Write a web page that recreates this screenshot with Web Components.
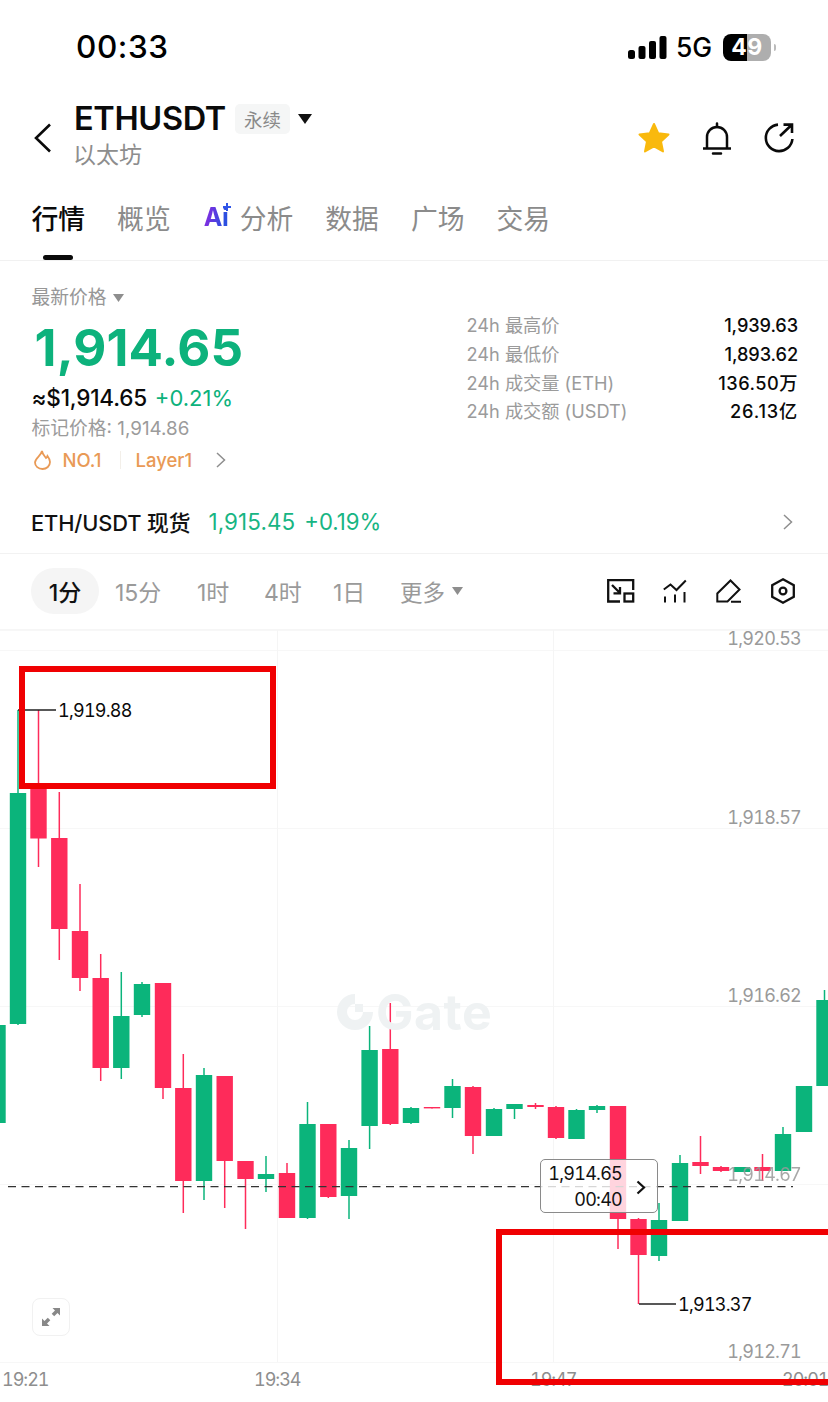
<!DOCTYPE html>
<html lang="zh">
<head>
<meta charset="utf-8">
<title>ETHUSDT</title>
<style>
html,body{margin:0;padding:0;background:#fff}
body{width:828px;height:1402px;overflow:hidden;font-family:Inter,"Noto Sans CJK SC",sans-serif;color:#0a0a0a;-webkit-font-smoothing:antialiased}
</style>
</head>
<body>
<app-page>
  <status-bar></status-bar>
  <coin-header></coin-header>
  <tab-bar></tab-bar>
  <price-panel></price-panel>
  <spot-row></spot-row>
  <interval-bar></interval-bar>
  <kline-chart></kline-chart>
</app-page>
<script>
function define(name, html){
  customElements.define(name, class extends HTMLElement{
    constructor(){super();this.attachShadow({mode:'open'}).innerHTML=html;}
  });
}
const FONT='Inter,"Noto Sans CJK SC",sans-serif';

define('app-page',`<style>:host{display:flex;flex-direction:column;width:828px;height:1402px;overflow:hidden;background:#fff}</style><slot></slot>`);

define('status-bar',`<style>
:host{display:flex;height:94px;box-sizing:border-box;align-items:flex-start;padding:27px 0 0 76px;font-family:${FONT}}
.t{font-size:31.5px;line-height:40px;font-weight:500;letter-spacing:.6px;width:552px;color:#000}
.r{position:relative;display:flex;align-items:center;height:40px}
svg{display:block}
.g{font-size:26.5px;font-weight:500;color:#000;margin-left:9px;width:47px;letter-spacing:-.2px}
.b{position:relative;width:48px;height:27px;border-radius:8px;overflow:hidden;background:linear-gradient(90deg,#000 50%,#aeaeae 50%);display:flex;align-items:center;justify-content:center;color:#fff;font-size:23px;font-weight:700;line-height:27px;letter-spacing:.5px}
.n{width:2px;height:7px;background:#bbb;border-radius:0 2px 2px 0;margin-left:3px}
</style>
<div class="t">00:33</div>
<div class="r">
<svg width="39" height="24" viewBox="0 0 39 24" fill="#000"><rect x="0" y="15" width="7" height="9" rx="2.5"/><rect x="10.500" y="11" width="7" height="13" rx="2"/><rect x="21" y="6" width="7" height="18" rx="2"/><rect x="31.500" y="1" width="7" height="23" rx="2"/></svg>
<span class="g">5G</span><div class="b">49</div><span class="n"></span>
</div>`);

define('coin-header',`<style>
:host{display:flex;height:90px;box-sizing:border-box;font-family:${FONT};position:relative}
.back{width:74px;flex:none;display:flex;align-items:center;padding:0 0 2px 34px;box-sizing:border-box}
.mid{flex:1;display:flex;flex-direction:column;padding-top:6px}
.top{display:flex;align-items:center;height:38px}
.sym{font-size:32.5px;font-weight:600;letter-spacing:-.35px;color:#0a0a0a;line-height:38px}
.tag{margin-left:9px;width:55px;height:30px;background:#f5f6f6;border-radius:5px;display:flex;align-items:center;justify-content:center;font-size:18.5px;color:#8a8a8a}
.car{margin-left:8px;margin-top:-1px}
.sub{font-size:23px;color:#8d8d8d;line-height:34px;margin-left:-1px}
.acts{display:flex;align-items:center;padding:0 34px 2px 0}
svg{display:block}
</style>
<div class="back"><svg width="18" height="30" viewBox="0 0 18 30" fill="none" stroke="#0a0a0a" stroke-width="2.600"><path d="M16 1.500 2 15l14 13.500"/></svg></div>
<div class="mid">
  <div class="top"><span class="sym">ETHUSDT</span><span class="tag">永续</span>
  <svg class="car" width="14" height="10" viewBox="0 0 14 10"><path d="M0 0h14L7 10z" fill="#111"/></svg></div>
  <div class="sub">以太坊</div>
</div>
<div class="acts">
<svg width="34" height="34" viewBox="0 0 34 34" style="margin-right:31px"><path d="M17 3l4.300 9.300 10.200 1.200-7.500 7 2 10L17 25.500 8 30.500l2-10-7.500-7 10.200-1.200z" fill="#f9b90d" stroke="#f9b90d" stroke-width="2" stroke-linejoin="round"/></svg>
<svg width="30" height="33" viewBox="0 0 30 33" fill="none" stroke="#0a0a0a" stroke-width="2.500" style="margin-right:32px"><path d="M1 26.500h28M5 26.500V15a10 10 0 0 1 20 0v11.500"/><path d="M15 1.500V5M11 31.500h8" stroke-linecap="round"/></svg>
<svg width="30" height="30" viewBox="0 0 30 30" fill="none" stroke="#0a0a0a" stroke-width="2.600"><path d="M14 1.600A13.300 13.300 0 1 0 28.400 16"/><path d="M16 13 27 2.500M19.500 1.600h8.500v8.500"/></svg>
</div>`);

define('tab-bar',`<style>
:host{display:flex;height:77px;box-sizing:border-box;padding:0 0 0 31.500px;gap:32px;border-bottom:1px solid #f1f1f1;font-family:${FONT};font-size:26.800px;color:#8b8b8b;position:relative;align-items:flex-start}
.tx{display:flex;align-items:center;height:70px;margin-top:-2px;white-space:nowrap;position:relative}
.on{color:#0a0a0a;font-weight:500}
.on::after{content:"";position:absolute;left:11px;width:30px;height:5px;border-radius:3px;background:#0a0a0a;top:73px}
.ai{display:inline-block;position:relative;width:27px;height:30px;margin-right:9px;margin-left:1px;font-weight:700;font-size:25px;line-height:30px;letter-spacing:-.5px;}
.ai b{font-weight:700;background:linear-gradient(100deg,#7a2fe0 20%,#2b4fe0 80%);-webkit-background-clip:text;background-clip:text;color:transparent;position:absolute;left:0;top:0}
.ai svg{position:absolute;right:0;top:1px}
</style>
<span class="tx on">行情</span><span class="tx">概览</span>
<span class="tx"><span class="ai"><b>Ai</b><svg width="8" height="8" viewBox="0 0 8 8"><path d="M4 0v8M0 4h8" stroke="#2f55e8" stroke-width="2"/></svg></span>分析</span>
<span class="tx">数据</span><span class="tx">广场</span><span class="tx">交易</span>`);

define('stat-row',`<style>
:host{display:flex;justify-content:space-between;height:28.800px;line-height:28.800px;font-family:${FONT};font-size:18.200px;white-space:nowrap}
.l{color:#9b9b9b}.v{color:#0a0a0a;font-weight:500;font-size:18.200px;letter-spacing:-.1px}
</style><span class="l"><slot name="label"></slot></span><span class="v"><slot name="value"></slot></span>`);

define('price-panel',`<style>
:host{display:flex;height:229px;box-sizing:border-box;padding:25px 30px 0 31.500px;font-family:${FONT}}
.left{width:435px;flex:none;display:flex;flex-direction:column}
.lab{font-size:18.800px;line-height:24px;color:#979797;display:flex;align-items:center}
.lab svg{margin-left:6px}
.price{font-size:51px;line-height:75px;font-weight:700;color:#0db27c;margin-left:3px;letter-spacing:.15px}
.usd{font-size:22.500px;line-height:26px;font-weight:500;color:#0a0a0a;letter-spacing:-.2px;display:flex}
.usd b{font-weight:400;color:#0db27c;margin-left:8px;font-size:22px;letter-spacing:0}
.mark{font-size:18.800px;line-height:26px;color:#9b9b9b;margin-top:5px}
.tags{display:flex;align-items:center;height:28px;margin-top:4px;font-size:18.500px;color:#e99a56;font-weight:500}
.tags svg{display:block}
.d{width:1px;height:18px;background:#f3efe9;margin:0 15px 0 18px}
.right{flex:1;padding-top:25px}
</style>
<div class="left">
<div class="lab">最新价格<svg width="11" height="8" viewBox="0 0 11 8"><path d="M0 0h11L5.500 8z" fill="#8e8e8e"/></svg></div>
<div class="price">1,914.65</div>
<div class="usd">≈$1,914.65<b>+0.21%</b></div>
<div class="mark">标记价格: 1,914.86</div>
<div class="tags">
<svg width="17" height="20" viewBox="0 0 17 20" fill="none" stroke="#e99a56" stroke-width="1.800" style="margin:0 12px 0 2px"><path d="M8 1c.500 3.500 2.200 4.500 4 7 .8-.500 1.300-1.200 1.500-2 1.500 2 2.500 3.700 2.500 6 0 4-3.300 7-7.500 7S1 16 1 12.500C1 8 7 6 8 1z"/></svg>
<span>NO.1</span><span class="d"></span><span>Layer1</span>
<svg width="10" height="16" viewBox="0 0 10 16" fill="none" stroke="#8e8e8e" stroke-width="1.500" style="margin-left:24px"><path d="M1 1l7.500 7L1 15"/></svg>
</div>
</div>
<div class="right">
<stat-row><span slot="label">24h 最高价</span><span slot="value">1,939.63</span></stat-row>
<stat-row><span slot="label">24h 最低价</span><span slot="value">1,893.62</span></stat-row>
<stat-row><span slot="label">24h 成交量 (ETH)</span><span slot="value" style="letter-spacing:.5px">136.50万</span></stat-row>
<stat-row><span slot="label">24h 成交额 (USDT)</span><span slot="value" style="letter-spacing:.8px">26.13亿</span></stat-row>
</div>`);

define('spot-row',`<style>
:host{display:flex;align-items:center;height:64px;box-sizing:border-box;padding:0 35px 0 31px;border-bottom:1px solid #f2f2f2;font-family:${FONT};font-size:21.800px;white-space:nowrap}
.n{font-weight:500;color:#111;letter-spacing:-.1px}
.p{color:#17b583;margin-left:18px;font-size:22.400px;letter-spacing:.1px}
.c{color:#17b583;margin-left:9px;font-size:22.200px}
svg{margin-left:auto;display:block}
</style><span class="n">ETH/USDT 现货</span><span class="p">1,915.45</span><span class="c">+0.19%</span>
<svg width="10" height="16" viewBox="0 0 10 16" fill="none" stroke="#8e8e8e" stroke-width="1.500"><path d="M1 1l7.500 7L1 15"/></svg>`);

define('interval-bar',`<style>
:host{display:flex;align-items:center;height:76px;box-sizing:border-box;padding:0 0 2px 31px;font-family:${FONT};font-size:23px;color:#9a9a9a;white-space:nowrap;border-bottom:1px solid #f6f6f6}
.on{display:flex;width:68px;height:46px;background:#f5f5f5;border-radius:23px;align-items:center;justify-content:center;color:#111;font-weight:500;margin-right:16px}
.i{width:82px;flex:none}.i2{width:67px;flex:none}
.i3{width:69px;flex:none}.i4{width:67px;flex:none}
.m{display:flex;align-items:center;width:207px;flex:none;font-size:22.500px}
.m svg{margin-left:7px}
.ic{display:flex;align-items:center}
svg{display:block}
</style>
<span class="on">1分</span><span class="i">15分</span><span class="i2">1时</span><span class="i3">4时</span><span class="i4">1日</span>
<span class="m">更多<svg width="11" height="8" viewBox="0 0 11 8"><path d="M0 0h11L5.500 8z" fill="#8e8e8e"/></svg></span>
<div class="ic">
<svg width="28" height="24" viewBox="0 0 28 24" fill="none" stroke="#111" stroke-width="2.300" style="margin-right:28px"><path d="M13 22.500H1.200V1.200h25V11"/><rect x="17.500" y="14.500" width="8.700" height="8"/><path d="M5 6l8 8M13 8v6.300H6.500"/></svg>
<svg width="24" height="24" viewBox="0 0 24 24" fill="none" stroke="#111" stroke-width="2" style="margin-right:29px"><path d="M.8 10.500 7.500 5.500l6 5.500L22.800 1.500"/><path d="M2 17.500v6M12 15.500v8M21.500 13v10.500"/></svg>
<svg width="26" height="24" viewBox="0 0 26 24" fill="none" stroke="#111" stroke-width="2" style="margin-right:29px"><path d="M1.300 22.500V14.500L14.500 1.500l9 9L11.500 22.500zM15 22.800h10"/></svg>
<svg width="24" height="26" viewBox="0 0 24 26" fill="none" stroke="#111" stroke-width="2.300"><path d="M12 1.300 22.800 7.200v11.600L12 24.700 1.200 18.800V7.200z"/><circle cx="12" cy="13" r="3.400"/></svg>
</div>`);

const G='#0bb47b',R='#fe2b5a';
/* cx, bodyTop, bodyBottom, wickTop, wickBottom, colour */
const CANDLES=[
[-2.5,1025,1123,1025,1123,G],[18,793,1024,710,1025,G],[38.5,788,838.5,710,867,R],[59.3,838,929,792,960,R],
[80,931,978,884,991,R],[100.7,978,1068,954,1081,R],[121.3,1016,1068,972,1079,G],[142,984,1015,982,1017,G],
[163,983,1088,983,1099,R],[183.3,1088,1181,1054,1213,R],[204,1075,1181,1068,1200,G],[224.7,1076,1161,1076,1208,R],
[245.5,1161,1179,1161,1229,R],[266,1174,1179,1156,1192,G],[287,1173,1218,1163,1218,R],[307.5,1124,1218,1102,1219,G],
[328.3,1124,1197,1124,1198,R],[349,1148,1196,1140,1219,G],[369.6,1050,1126,1026,1149,G],[390.3,1049,1124,1003,1125,R],
[411,1108,1123,1107,1124,G],[432,1107,1108.4,1107,1108.4,R],[452.5,1086,1108,1079,1118,G],[473,1087,1136,1086,1154,R],
[494,1109,1136,1108,1136,G],[514.5,1104,1109,1104,1119,G],[535.5,1105,1107,1103,1109,R],[556,1107,1138,1106,1139,R],
[576.5,1110,1139,1109,1139,G],[597,1106,1110,1105,1113,G],[618,1106,1219,1106,1249,R],[638.5,1219,1255,1218,1304,R],
[659,1220,1256,1203,1261,G],[680,1163,1221,1155,1221,G],[700.5,1162,1166,1136,1174,R],[721,1167,1171,1166,1172,R],
[742,1167,1172,1167,1172,G],[762.5,1167,1171,1154,1181,R],[783,1134,1171,1127,1171,G],[804,1086,1132,1086,1132,G],
[824.5,1000,1086,990,1086,G]];
let svg='';
for(const y of [630,650,828,1006,1184,1362]) svg+=`<path d="M0 ${y+.5}H828" stroke="#f7f7f7"/>`;
for(const x of [277,553]) svg+=`<path d="M${x+.5} 630V1362" stroke="#f5f5f5"/>`;
for(const [x,t,b,wt,wb,c] of CANDLES){
  svg+=`<path d="M${x} ${wt}V${wb}" stroke="${c}" stroke-width="1.500"/><rect x="${x-8.2}" y="${t}" width="16.400" height="${b-t}" fill="${c}"/>`;
}
svg+=`<path d="M8 1186.700H793" stroke="#333" stroke-width="1.200" stroke-dasharray="8 5.500"/>`;
svg+=`<path d="M18 710H56M639 1304H676" stroke="#222" stroke-width="1.300" fill="none"/>`;

define('kline-chart',`<style>
:host{display:block;position:relative;height:772px;flex:none;font-family:${FONT};font-variant-numeric:tabular-nums}
svg.c{position:absolute;left:0;top:0}
.a{position:absolute;right:27px;font-size:18px;line-height:16px;color:#9a9a9a;letter-spacing:-.75px}
.x{position:absolute;top:738px;font-size:18px;line-height:24px;color:#8e8e8e;white-space:nowrap;letter-spacing:-1px}
.hl{position:absolute;font-size:18px;line-height:24px;color:#0a0a0a;letter-spacing:-.75px}
.wm{position:absolute;left:335px;top:362px;display:flex;align-items:center;height:40px;color:#eff2f3;font-size:50px;font-weight:700;line-height:40px;letter-spacing:.5px}
.wm svg{margin-right:1px}
.tip{position:absolute;left:540px;top:529px;width:118px;height:54px;box-sizing:border-box;border:1px solid #8a8a8a;border-radius:5px;background:rgba(255,255,255,.8);font-size:18px;line-height:26px;color:#111;text-align:right;padding:1px 35px 0 0;letter-spacing:-.75px}
.tip svg{position:absolute;right:11px;top:20px}
.box{position:absolute;box-sizing:border-box;border:6px solid #f00002}
.fs{position:absolute;left:32px;top:668px;width:38px;height:38px;box-sizing:border-box;border:1.500px solid #f1f1f1;border-radius:8px;display:flex;align-items:center;justify-content:center;background:#fff}
</style>
<svg class="c" width="828" height="772" viewBox="0 630 828 772">${svg}</svg>
<div class="wm"><svg width="40" height="38" viewBox="0 0 40 38"><path d="M20 1a18 18 0 1 0 18 18H28a8 8 0 1 1-8-8z" fill="#eff2f3"/><path d="M20 11h8v8h-8z" fill="#eff2f3"/></svg>Gate</div>
<span class="a" style="top:1px">1,920.53</span>
<span class="a" style="top:180px">1,918.57</span>
<span class="a" style="top:358px">1,916.62</span>
<span class="a" style="top:537px;opacity:.85">1,914.67</span>
<span class="a" style="top:714px">1,912.71</span>
<span class="x" style="left:2px">19:21</span>
<span class="x" style="left:254px">19:34</span>
<span class="x" style="left:530px">19:47</span>
<span class="x" style="left:782px">20:01</span>
<span class="hl" style="left:58px;top:69px">1,919.88</span>
<span class="hl" style="left:678px;top:663px">1,913.37</span>
<div class="tip">1,914.65<br>00:40<svg width="10" height="15" viewBox="0 0 10 15" fill="none" stroke="#111" stroke-width="2.200"><path d="M1.500 1.500 8 7.500l-6.500 6"/></svg></div>
<div class="fs"><svg width="20" height="20" viewBox="0 0 20 20" fill="#888"><path d="M11.500 1H19v7.500l-2.500-2.500-3.300 3.300-2.500-2.500L14 3.500zM8.500 19H1v-7.500l2.500 2.500 3.300-3.300 2.500 2.500L6 16.500z"/></svg></div>
<div class="box" style="left:19px;top:36px;width:257px;height:123px"></div>
<div class="box" style="left:496px;top:599px;width:340px;height:156px"></div>`);
</script>
</body>
</html>
